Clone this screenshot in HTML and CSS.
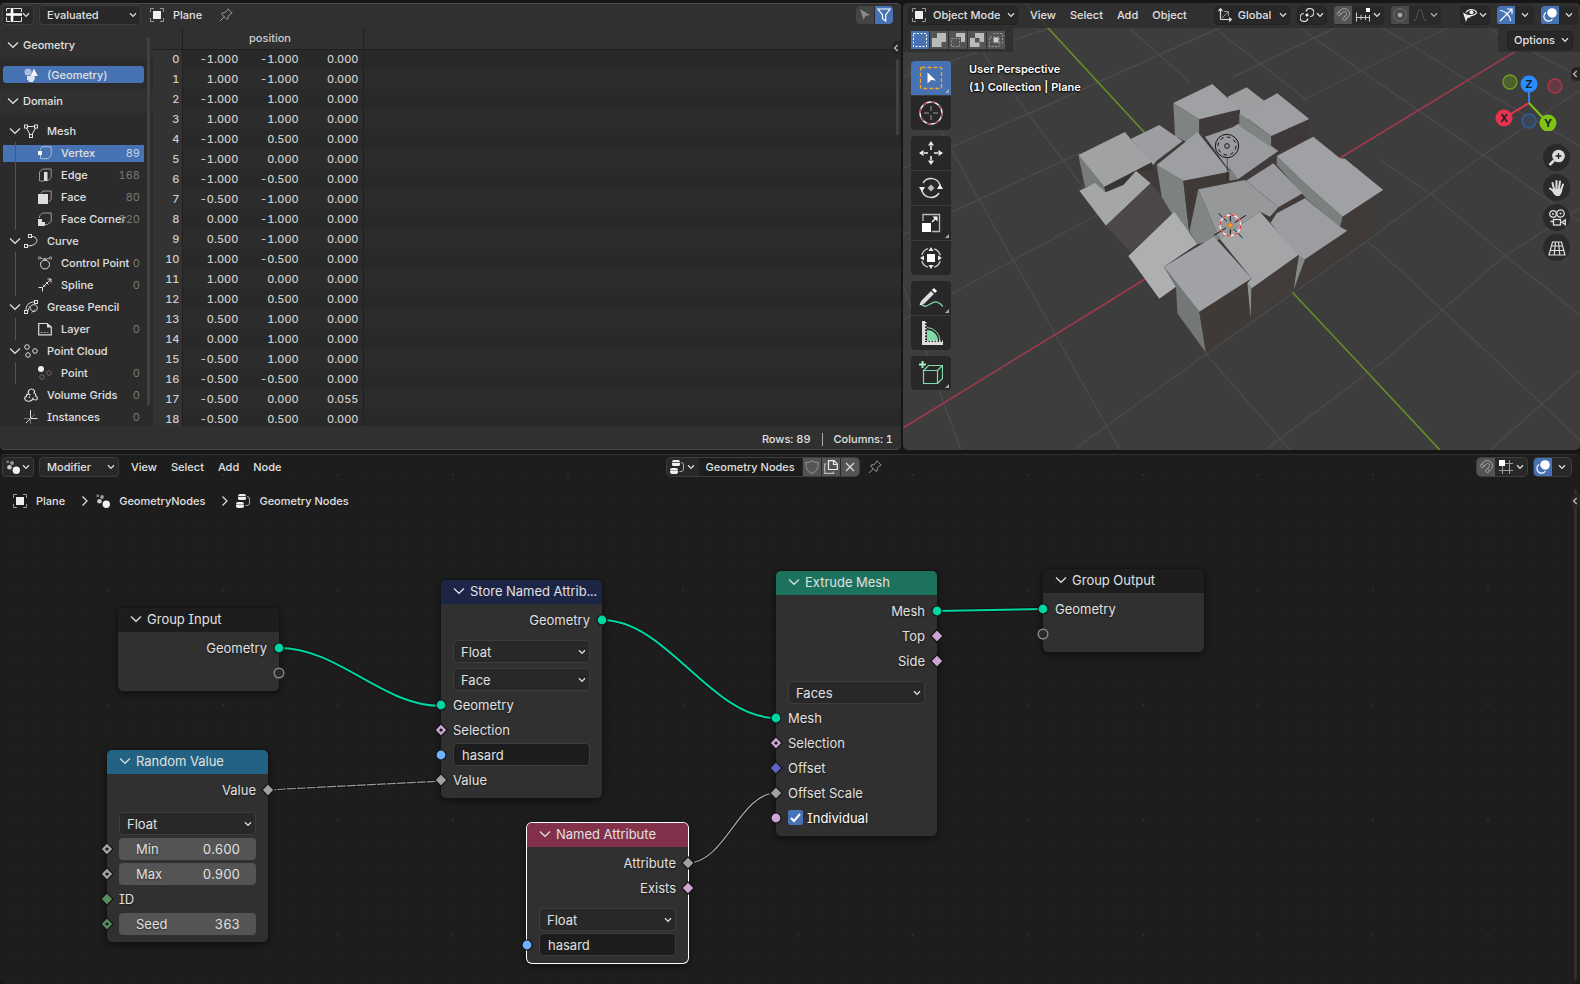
FILE: index.html
```html
<!DOCTYPE html>
<html lang="en">
<head>
<meta charset="utf-8">
<title>Geometry Nodes</title>
<link rel="stylesheet" href="styles.css">
</head>
<body>
<svg class="defs" aria-hidden="true">
  <defs>
    <symbol id="i-chev" viewBox="0 0 8 8"><path d="M1 2.3 4 5.4 7 2.3" fill="none" stroke="currentColor" stroke-width="1.3"/></symbol>
    <symbol id="i-open" viewBox="0 0 12 8"><path d="M1 1.5 6 6.3 11 1.5" fill="none" stroke="currentColor" stroke-width="1.2"/></symbol>
    <symbol id="i-sep" viewBox="0 0 8 12"><path d="M1.5 1.5 6 6 1.5 10.5" fill="none" stroke="currentColor" stroke-width="1.2"/></symbol>
    <symbol id="i-sheet" viewBox="0 0 16 16"><g fill="none" stroke="currentColor"><path d="M4 1.5H.5V4.500M7.500 1.500H15.500V5M.5 10V14.500H4M7.500 14.500H15.500V10"/><path d="M6 1V15M0 7.500H16" stroke="#fff" stroke-width="2.600"/></g></symbol>
    <symbol id="i-object" viewBox="0 0 14 14"><rect x="3" y="3" width="8" height="8" fill="#eee"/><path d="M.5 4V.5H4M10 .5h3.500V4M13.500 10v3.500H10M4 13.500H.5V10" fill="none" stroke="#999"/></symbol>
    <symbol id="i-pin" viewBox="0 0 14 14"><path d="M9 .8 13.200 5 11.800 5.400 9.400 8.200 9 11 7.800 11.300 2.700 6.200 3 5.200 5.800 4.600 8.500 2.300ZM5.200 8.800 1 13" fill="none" stroke="#999"/></symbol>
    <symbol id="i-cursor" viewBox="0 0 12 12"><path d="M1 0 11 6 6.500 7 4.500 11Z" fill="currentColor"/></symbol>
    <symbol id="i-filter" viewBox="0 0 14 14"><path d="M.8 1H13.200L8.700 7V13L5.500 10.500V7Z" fill="none" stroke="#fff" stroke-width="1.200"/></symbol>
    <symbol id="i-geo" viewBox="0 0 14 14"><circle cx="4" cy="4" r="3.600" fill="#a9bede"/><path d="M10 .5 13.800 8H6.500Z" fill="#f4f4f4"/><path d="M3 8h7.500l.5 2.500-2 3.500H5.500L3 11.500Z" fill="#dbe3f0"/></symbol>
    <symbol id="i-mesh" viewBox="0 0 14 14"><g fill="none" stroke="currentColor"><rect x=".5" y="1" width="3" height="3"/><rect x="10.500" y="1" width="3" height="3"/><rect x="5.500" y="10.500" width="3" height="3"/><path d="M3.500 2.500h7M2.500 4l3.500 6.500M11.500 4 8 10.500"/></g></symbol>
    <symbol id="i-vertex" viewBox="0 0 14 14"><path d="M2.500 4V2.500L4 .8h9.200V9l-2 2.700q-1 1-2.200 1H2.500V9" fill="none" stroke="#a9bede"/><rect y="5" width="4" height="4" fill="#fff"/></symbol>
    <symbol id="i-edge" viewBox="0 0 14 14"><path d="M6 13H1.500V4L4.500 1h8.700v8.500L9.500 13" fill="none" stroke="#999"/><rect x="6" y="4" width="3.500" height="9" fill="#ddd"/></symbol>
    <symbol id="i-face" viewBox="0 0 14 14"><path d="M3 3.500 5 1h8.200v8L11 12" fill="none" stroke="#999"/><rect y="4" width="10" height="10" fill="#ddd"/></symbol>
    <symbol id="i-corner" viewBox="0 0 14 14"><path d="M1.500 6V4L4.500 1h8.700v8.500L9.500 12.500H7" fill="none" stroke="#999"/><path d="M0 7h4v3h3v4H0Z" fill="#ddd"/></symbol>
    <symbol id="i-curve" viewBox="0 0 14 14"><g fill="none" stroke="currentColor"><rect x="4.500" y=".5" width="3" height="3"/><rect x=".5" y="10.500" width="3" height="3"/><path d="M7.500 2.500C15 2 15.500 12 3.500 12"/></g></symbol>
    <symbol id="i-ctrl" viewBox="0 0 14 14"><g fill="none"><circle cx="7" cy="8.500" r="4.500" stroke="currentColor"/><path d="M2 2.500h3.500M8.500 2.500H12M.5 1h2v2h-2ZM11.500 1h2v2h-2Z" stroke="#999"/><circle cx="7" cy="3.500" r="1" stroke="currentColor"/></g></symbol>
    <symbol id="i-spline" viewBox="0 0 14 14"><path d="M.5 9.500H4.500V13.500M4.500 9.500 13 1M9.500 1H13V4.500M5 6.500l2.500 2.500M8 4l2.500 2.500" fill="none" stroke="currentColor"/></symbol>
    <symbol id="i-grease" viewBox="0 0 14 14"><g fill="none" stroke="currentColor"><rect x="10.500" y=".5" width="3" height="3"/><rect x=".5" y="10.500" width="3" height="3"/><path d="M10.500 2C4 2 2 6 2 10.500M3.500 12.500c1-6 5-9 8-7.500s2 6-1 6.500-4-3-5-5M8 12.500l3-3"/></g></symbol>
    <symbol id="i-layer" viewBox="0 0 14 14"><path d="M.7 1.500H9l4.300 3.500v7.800H.7Z" fill="none" stroke="#ddd" stroke-width="1.200"/><path d="M9 1v4.500h4.500Z" fill="#ddd"/><path d="M2.500 10.500h9" stroke="#999" stroke-dasharray="2 1"/></symbol>
    <symbol id="i-cloud" viewBox="0 0 14 14"><g fill="none" stroke="currentColor"><circle cx="3" cy="3" r="2.300"/><circle cx="11" cy="7" r="2.300"/><circle cx="4" cy="11" r="2.300"/></g></symbol>
    <symbol id="i-point" viewBox="0 0 14 14"><circle cx="3" cy="3" r="3" fill="#eee"/><g fill="none" stroke="#666"><circle cx="11" cy="7" r="2.300"/><circle cx="4" cy="11" r="2.300"/></g></symbol>
    <symbol id="i-volume" viewBox="0 0 14 14"><path d="M3 13C0 12 0 9 2.500 8.500 2 6.500 3.500 6 4.500 6 3.500 3 5.500 1 7.500 1c3 0 3.500 2.500 2.500 4 2 .5 2 2 1.500 3 2.500.5 2.500 4 0 4-1 0-2-.5-2.500-1.500C8 13 5 13.500 3 13ZM4.500 6l2 1M5 10l1-1.500" fill="none" stroke="currentColor" stroke-width="1.200"/></symbol>
    <symbol id="i-inst" viewBox="0 0 14 14"><path d="M6.500 0v8.500H13.500M6.500 8.500 2 13" fill="none" stroke="currentColor"/><path d="M6.500 8.500V14M0 8.500h6.500M6.500 8.500 11 4" fill="none" stroke="#777"/></symbol>
    <symbol id="i-gnodes" viewBox="0 0 14 14"><circle cx="1.700" cy="1.700" r="1.500" fill="#777"/><circle cx="6" cy="3" r="1.900" fill="#999"/><circle cx="3.500" cy="7.300" r="2.300" fill="#ccc"/><circle cx="10.300" cy="10.200" r="3.700" fill="#f2f2f2"/></symbol>
    <symbol id="i-tree" viewBox="0 0 14 14"><g fill="#eee"><path d="M2 2.200Q2 0 4 0h4q2 0 2 2.200ZM2 3h8v1.500Q10 6 8.500 6h-5Q2 6 2 4.500ZM0 10.200Q0 8 2 8h4q2 0 2 2.200Z"/><path d="M.5 11h7v1.500q0 1-1 1h-5q-1 0-1-1Z" stroke="#eee"/></g><path d="M11 2.500q2.500 0 2.500 2.500v4q0 2.500-2.500 2.500H9.500" fill="none" stroke="#aaa"/></symbol>
    <symbol id="i-orient" viewBox="0 0 14 14"><path d="M2.500 11.500V1M.5 3l2-2.300 2 2.300M2.500 11.500H13M11 9.500l2.300 2-2.300 2" fill="none" stroke="#ddd" stroke-width="1.200"/><path d="M4 10l6-6M6 3.500h4.500V8" fill="none" stroke="#999"/></symbol>
    <symbol id="i-pivot" viewBox="0 0 14 14"><g fill="none" stroke="#ddd" stroke-width="1.200"><path d="M6 3.500A4 4 0 1 1 10 8.500"/><path d="M8 10.500A4 4 0 1 1 4 5.500"/></g><circle cx="7" cy="7" r="1.500" fill="#fff"/></symbol>
    <symbol id="i-magnet" viewBox="0 0 14 14"><path d="M1 5.500 5 1.800C7 0 10 .2 12 2.200s2 5 0 7L8.500 13 6.300 10.800 10 7c1-1 .8-2.200 0-2.800-.8-.8-2-.8-2.800 0L3.300 8ZM3 3.700 5.200 6M10.700 10.800 8.400 8.600" fill="none" stroke="#a8a8a8"/></symbol>
    <symbol id="i-incr" viewBox="0 0 14 14"><path d="M.5 4.500v9M13.500 7v6.500M5 7v5M9.500 7v5M.5 9.500h13" fill="none" stroke="#ccc"/><rect x="10" y="0" width="4" height="4" fill="#fff"/></symbol>
    <symbol id="i-snapgrid" viewBox="0 0 14 14"><path d="M3.500 5v9M10.500 0v14M5 3.500h9M0 10.500h14" fill="none" stroke="#999"/><rect x="0" y="0" width="6" height="6" fill="#fff"/></symbol>
    <symbol id="i-prop" viewBox="0 0 14 14"><circle cx="7" cy="7" r="6.300" fill="none" stroke="#888"/><circle cx="7" cy="7" r="2.300" fill="#ddd"/></symbol>
    <symbol id="i-fall" viewBox="0 0 14 14"><path d="M.5 12.500C5 12.500 4 1.500 7 1.500s2 11 6.500 11" fill="none" stroke="#666"/></symbol>
    <symbol id="i-eye" viewBox="0 0 14 14"><path d="M3 4.500C5.500.500 11.500.500 13.800 4.500 11.500 8 7 8 5 7" fill="none" stroke="#eee" stroke-width="1.200"/><circle cx="8.500" cy="4.300" r="2" fill="#eee"/><path d="M0 4.500 8.500 9 4.500 10 3 14Z" fill="#eee"/></symbol>
    <symbol id="i-gizmo" viewBox="0 0 14 14"><path d="M1 2.500C6 2.500 11.500 8 11.500 13" fill="none" stroke="#fff" stroke-width="1.200"/><path d="M1 13 12.500 1.500M8 1h5v5" fill="none" stroke="#fff" stroke-width="1.200"/></symbol>
    <symbol id="i-over" viewBox="0 0 14 14"><circle cx="9" cy="5" r="4.800" fill="#fff"/><path d="M3 4.500A4.700 4.700 0 1 0 9.500 11" fill="none" stroke="#fff" stroke-width="1.200"/><path d="M4.500 6.500A3 3 0 0 0 7.500 9.700" fill="none" stroke="#4772b3" stroke-width="1.200"/></symbol>
    <symbol id="i-shield" viewBox="0 0 14 14"><path d="M7 .8C9 2.200 11 2.600 13.200 2.500 13.200 8 11.500 11.500 7 13.400 2.500 11.500.8 8 .8 2.500 3 2.600 5 2.200 7 .8Z" fill="none" stroke="#999"/></symbol>
    <symbol id="i-copy" viewBox="0 0 14 14"><path d="M4.500.7H10L13.300 4V9.500H4.500ZM9.500 1V4.500H13" fill="none" stroke="#eee" stroke-width="1.200"/><path d="M2.500 4H.7v9.300H9.500V11.500" fill="none" stroke="#bbb" stroke-width="1.200"/></symbol>
    <symbol id="i-x" viewBox="0 0 14 14"><path d="M3 3l8 8M11 3l-8 8" fill="none" stroke="#ddd" stroke-width="1.200"/></symbol>
    <symbol id="s-set" viewBox="0 0 14 14"><rect x=".5" y=".5" width="13" height="13" fill="none" stroke="#fff" stroke-dasharray="2 1.500"/></symbol>
    <symbol id="s-ext" viewBox="0 0 14 14"><path d="M5 0h9v9H9.500v5H0V5h5Z" fill="#bbb"/></symbol>
    <symbol id="s-sub" viewBox="0 0 14 14"><path d="M5 0h9v9H10V4H5Z" fill="#bbb"/><rect x=".5" y="5.500" width="8" height="8" fill="none" stroke="#999" stroke-dasharray="2 1.500"/></symbol>
    <symbol id="s-inv" viewBox="0 0 14 14"><path fill-rule="evenodd" d="M5 0h9v9H9.500v5H0V5h5ZM5 5v4.500h4.500V5Z" fill="#bbb"/></symbol>
    <symbol id="s-int" viewBox="0 0 14 14"><path d="M4 .5h9.500V10H10M10 4H.5v9.500H10Z" fill="none" stroke="#999" stroke-dasharray="2 1.500"/><rect x="4.500" y="4.500" width="5" height="5" fill="#ccc"/></symbol>
    <symbol id="t-select" viewBox="0 0 24 24"><rect x="1.500" y="1.500" width="21" height="21" rx="1" fill="none" stroke="#f5a623" stroke-width="1.300" stroke-dasharray="4 2"/><path d="M8.500 6.500 17 14.500 12 14 8.500 17.500Z" fill="#fff"/></symbol>
    <symbol id="t-cursor" viewBox="0 0 24 24"><circle cx="12" cy="12" r="11" fill="none" stroke="#eee" stroke-width="1.400"/><circle cx="12" cy="12" r="11" fill="none" stroke="#b04050" stroke-width="1.400" stroke-dasharray="4.300 4.300"/><path d="M12 5v5M12 14v5M5 12h5M14 12h5" stroke="#999"/></symbol>
    <symbol id="t-move" viewBox="0 0 24 24"><path d="M12 0l3 4.500H9ZM12 24l3-4.500H9ZM0 12l4.500-3v6ZM24 12l-4.500-3v6Z" fill="#eee"/><path d="M12 5v4M12 15v4M5 12h4M15 12h4" stroke="#eee" stroke-width="1.600"/></symbol>
    <symbol id="t-rotate" viewBox="0 0 24 24"><path d="M4 7A9.500 9.500 0 0 1 21 9M20 17A9.500 9.500 0 0 1 3 15" fill="none" stroke="#ddd" stroke-width="1.400"/><path d="M0 11h6l-3 5ZM24 13h-6l3-5Z" fill="#eee"/><path d="M12 8.500l3.500 3.500-3.500 3.500L8.500 12Z" fill="#bbb"/></symbol>
    <symbol id="t-scale" viewBox="0 0 24 24"><path d="M4 10V3.500H20.500V20.500H13" fill="none" stroke="#bbb" stroke-width="1.300"/><rect x="3" y="12" width="9" height="9" fill="#fff"/><path d="M13 11l4-4" stroke="#fff" stroke-width="1.500"/><path d="M18.500 5.500v5l-5-5Z" fill="#fff"/></symbol>
    <symbol id="t-xform" viewBox="0 0 24 24"><circle cx="12" cy="12" r="9.700" fill="none" stroke="#ccc" stroke-width="1.300" stroke-dasharray="9 6.230" stroke-dashoffset="-3"/><rect x="8" y="8" width="8" height="8" fill="#fff"/><path d="M12 1l2.500 4h-5ZM12 23l2.500-4h-5ZM1 12l4-2.500v5ZM23 12l-4-2.500v5Z" fill="#eee"/></symbol>
    <symbol id="t-draw" viewBox="0 0 24 24"><path d="M2 18C8 25 13 13 19 16.500 21 17.500 22 18 24 20.500" fill="none" stroke="#82d9a8" stroke-width="1.300"/><path d="M3.500 16.500 13.500 6.500" stroke="#ddd" stroke-width="4"/><path d="M.5 19.500 2 15l3 3Z" fill="#eee"/><path d="M14.500 5.500l2-2" stroke="#fff" stroke-width="4.500"/></symbol>
    <symbol id="t-measure" viewBox="0 0 24 24"><path d="M8 20V9A11 11 0 0 1 19 20Z" fill="#82d9a8"/><path d="M8 6.500A13.500 13.500 0 0 1 21 20" fill="none" stroke="#82d9a8"/><path d="M4.500 0V22.500H24" fill="none" stroke="#ddd" stroke-width="3"/><path d="M6.500 1v19M8 20.500h16" stroke="#ddd" stroke-width="2" stroke-dasharray="1.500 1.500"/></symbol>
    <symbol id="t-cube" viewBox="0 0 24 24"><path d="M4.500 9.500h14v13h-14ZM4.500 9.500l5-5H23.500v13l-5 5M18.500 9.500 23.500 4.500" fill="none" stroke="#82d9a8" stroke-width="1.200"/><path d="M3.500 0v7M0 3.500h7" stroke="#a4ecc4" stroke-width="2"/></symbol>
    <symbol id="n-zoom" viewBox="0 0 18 18"><circle cx="10.500" cy="7" r="6.300" fill="#ddd"/><path d="M6 11.500 1.500 16" stroke="#ddd" stroke-width="2.500"/><path d="M10.500 4v6M7.500 7h6" stroke="#222" stroke-width="1.300"/></symbol>
    <symbol id="n-hand" viewBox="0 0 18 18"><g stroke="#ddd" stroke-width="2" stroke-linecap="round"><path d="M6 10 4.500 4M8.500 9V2M11 9l1-6.500M13.200 10.500 15 5.500M5.500 12 2 9.500"/></g><path d="M5 9.500h9.300q0 5-3 7.500H8Q5 14.500 4 12Z" fill="#ddd"/></symbol>
    <symbol id="n-cam" viewBox="0 0 18 18"><g fill="none" stroke="#ddd" stroke-width="1.300"><circle cx="5" cy="5" r="3.300"/><circle cx="12.500" cy="4.500" r="3.700"/><rect x="5.500" y="10.500" width="7" height="5.500"/><path d="M5.500 12.500H2.500M14 13.200l3.300-2.500v5Z"/></g><circle cx="5" cy="5" r="1" fill="#ddd"/><circle cx="12.500" cy="4.500" r="1" fill="#ddd"/></symbol>
    <symbol id="n-grid" viewBox="0 0 18 18"><path d="M4.500 3h9L17 16H1ZM3.500 7h11M2.500 11.500h13M7.500 3 6.200 16M10.500 3l1.300 13" fill="none" stroke="#ddd" stroke-width="1.200"/></symbol>
    <symbol id="k-circle" viewBox="0 0 16 16"><circle cx="8" cy="8" r="5" fill="currentColor" stroke="#151515" stroke-width="1.200"/></symbol>
    <symbol id="k-ring" viewBox="0 0 16 16"><circle cx="8" cy="8" r="4.800" fill="#2a2a2a" stroke="#888" stroke-width="1.400"/></symbol>
    <symbol id="k-dia" viewBox="0 0 16 16"><path d="M8 1.900 14.100 8 8 14.100 1.900 8Z" fill="currentColor" stroke="#151515" stroke-width="1.200"/></symbol>
    <symbol id="k-dot" viewBox="0 0 16 16"><path d="M8 1.900 14.100 8 8 14.100 1.900 8Z" fill="currentColor" stroke="#151515" stroke-width="1.200"/><circle cx="8" cy="8" r="1.600" fill="#151515"/></symbol>
  </defs>
</svg>

<main class="app">
  <section class="sheet" aria-label="Spreadsheet">
    <header class="bar">
      <button class="btn kind" aria-label="Editor type"><svg class="i16"><use href="#i-sheet"/></svg><svg class="chev"><use href="#i-chev"/></svg></button>
      <span class="pick eval"><select aria-label="Object evaluation state"><option>Evaluated</option></select><svg class="chev"><use href="#i-chev"/></svg></span>
      <span class="crumb"><svg class="i14"><use href="#i-object"/></svg>Plane</span>
      <button class="bare" aria-label="Pin"><svg class="i14"><use href="#i-pin"/></svg></button>
      <span class="group end">
        <button class="tog off" aria-label="Selected only"><svg class="i12"><use href="#i-cursor"/></svg></button><button class="tog on" aria-label="Filter"><svg class="i14"><use href="#i-filter"/></svg></button>
      </span>
    </header>
    <div class="sheet-body">
      <aside class="side">
        <h2 class="panel"><svg class="open"><use href="#i-open"/></svg>Geometry</h2>
        <button class="row pill geo"><svg class="i14"><use href="#i-geo"/></svg>(Geometry)</button>
        <h2 class="panel">
          <svg class="open"><use href="#i-open"/></svg>Domain</h2>
        <div class="tree">
          <div class="row head"><svg class="open"><use href="#i-open"/></svg><svg class="i14"><use href="#i-mesh"/></svg>Mesh</div>
          <div class="kids">
            <button class="row pill"><svg class="i14"><use href="#i-vertex"/></svg><span>Vertex</span><b>89</b></button>
            <button class="row"><svg class="i14"><use href="#i-edge"/></svg><span>Edge</span><b>168</b></button>
            <button class="row"><svg class="i14"><use href="#i-face"/></svg><span>Face</span><b>80</b></button>
            <button class="row"><svg class="i14"><use href="#i-corner"/></svg><span>Face Corner</span><b>320</b></button>
          </div>
          <div class="row head"><svg class="open"><use href="#i-open"/></svg><svg class="i14"><use href="#i-curve"/></svg>Curve</div>
          <div class="kids">
            <button class="row"><svg class="i14"><use href="#i-ctrl"/></svg><span>Control Point</span><b>0</b></button>
            <button class="row"><svg class="i14"><use href="#i-spline"/></svg><span>Spline</span><b>0</b></button>
          </div>
          <div class="row head"><svg class="open"><use href="#i-open"/></svg><svg class="i14"><use href="#i-grease"/></svg>Grease Pencil</div>
          <div class="kids">
            <button class="row"><svg class="i14"><use href="#i-layer"/></svg><span>Layer</span><b>0</b></button>
          </div>
          <div class="row head"><svg class="open"><use href="#i-open"/></svg><svg class="i14"><use href="#i-cloud"/></svg>Point Cloud</div>
          <div class="kids">
            <button class="row"><svg class="i14"><use href="#i-point"/></svg><span>Point</span><b>0</b></button>
          </div>
          <button class="row flat"><svg class="i14"><use href="#i-volume"/></svg><span>Volume Grids</span><b>0</b></button>
          <button class="row flat"><svg class="i14"><use href="#i-inst"/></svg><span>Instances</span><b>0</b></button>
        </div>
        <i class="scroll"></i>
      </aside>
      <div class="grid">
        <table>
          <thead><tr><th></th><th colspan="3">position</th><th></th></tr></thead>
          <tbody>
            <tr><th>0</th><td>-1.000</td><td>-1.000</td><td>0.000</td><td></td></tr>
            <tr><th>1</th><td>1.000</td><td>-1.000</td><td>0.000</td><td></td></tr>
            <tr><th>2</th><td>-1.000</td><td>1.000</td><td>0.000</td><td></td></tr>
            <tr><th>3</th><td>1.000</td><td>1.000</td><td>0.000</td><td></td></tr>
            <tr><th>4</th><td>-1.000</td><td>0.500</td><td>0.000</td><td></td></tr>
            <tr><th>5</th><td>-1.000</td><td>0.000</td><td>0.000</td><td></td></tr>
            <tr><th>6</th><td>-1.000</td><td>-0.500</td><td>0.000</td><td></td></tr>
            <tr><th>7</th><td>-0.500</td><td>-1.000</td><td>0.000</td><td></td></tr>
            <tr><th>8</th><td>0.000</td><td>-1.000</td><td>0.000</td><td></td></tr>
            <tr><th>9</th><td>0.500</td><td>-1.000</td><td>0.000</td><td></td></tr>
            <tr><th>10</th><td>1.000</td><td>-0.500</td><td>0.000</td><td></td></tr>
            <tr><th>11</th><td>1.000</td><td>0.000</td><td>0.000</td><td></td></tr>
            <tr><th>12</th><td>1.000</td><td>0.500</td><td>0.000</td><td></td></tr>
            <tr><th>13</th><td>0.500</td><td>1.000</td><td>0.000</td><td></td></tr>
            <tr><th>14</th><td>0.000</td><td>1.000</td><td>0.000</td><td></td></tr>
            <tr><th>15</th><td>-0.500</td><td>1.000</td><td>0.000</td><td></td></tr>
            <tr><th>16</th><td>-0.500</td><td>-0.500</td><td>0.000</td><td></td></tr>
            <tr><th>17</th><td>-0.500</td><td>0.000</td><td>0.055</td><td></td></tr>
            <tr><th>18</th><td>-0.500</td><td>0.500</td><td>0.000</td><td></td></tr>
          </tbody>
        </table>
        <i class="scroll"></i>
        <button class="flap" aria-label="Show sidebar"><svg class="chev"><use href="#i-chev"/></svg></button>
      </div>
    </div>
    <footer class="status"><span>Rows: 89</span><i></i><span>Columns: 1</span></footer>
  </section>

  <section class="view" aria-label="3D Viewport">
    <svg class="scene" viewBox="903 3 677 447" preserveAspectRatio="xMidYMid slice" role="img" aria-label="Extruded cubes on a grid">
      <g stroke="#4a4a4a" stroke-width="1.400" fill="none">
        <path d="M903 320 1097 215 1180 172M903 235 952 212 1080 153M903 168 1030 113 1210 32 1275 3M903 77 1050 28M1233 77 1335 28 1385 3M1303 100 1412 45 1500 3"/>
        <path d="M1073 450 1205 355 1367 241 1483 155 1580 90M1265 450 1385 360 1503 257 1580 208M1490 450 1580 370"/>
        <path d="M903 285 940 393 961 450M907 67 968 180 1055 334 1120 450M983 53 1080 183 1100 215M1205 353 1290 450M1130 29 1190 82M1217 30 1307 100M1300 28 1363 72 1483 155 1580 222M1367 241 1400 270 1580 440M1380 160 1430 193 1507 257 1580 315M1381 27 1412 45 1487 93 1580 146M1490 29 1580 77"/>
      </g>
      <path d="M903 428 1100 307 1340 158 1580 12" stroke="#a03a4b" stroke-width="1.600" fill="none"/>
      <path d="M1025 3 1144 132 1293 293 1355 359 1440 450" stroke="#648a26" stroke-width="1.800" fill="none"/>
      <g transform="translate(1060 70) scale(.3333)">
        <path d="M345 110 520 110 740 150 742 205 760 205 968 362 948 460 918 512 700 665 572 748 438 848 352 730 350 680 298 686 200 540 140 460 75 345 100 270 300 200Z" fill="#403b39"/>
        <path d="M503 80 560 52 612 92 560 150 530 140Z" fill="#9c9ea0"/>
        <path d="M340 99 418 148 418 200 380 216 345 198Z" fill="#7f8381"/>
        <path d="M418 148 540 118 540 165 430 200 418 195Z" fill="#3f3a39"/>
        <path d="M340 99 457 42 540 118 418 148Z" fill="#9fa1a4"/>
        <path d="M518 172 535 161 555 174 657 242 535 328 500 290 435 200Z" fill="#999b9e"/>
        <path d="M538 130 634 198 634 232 538 168Z" fill="#7f8381"/>
        <path d="M634 198 748 147 742 205 655 243 634 228Z" fill="#3e3938"/>
        <path d="M540 130 652 70 748 147 634 198Z" fill="#9d9fa2"/>
        <path d="M650 258 735 340 848 440 843 475 740 387 650 284Z" fill="#7b7f7d"/>
        <path d="M650 258 760 200 840 265 855 266 970 360 848 440 735 340Z" fill="#9fa1a4"/>
        <path d="M848 440 970 360 948 460 918 512 840 470Z" fill="#403a38"/>
        <path d="M535 328 657 242 650 262 560 328Z" fill="#403b3a"/>
        <path d="M558 332 640 280 728 370 655 412Z" fill="#999b9e"/>
        <path d="M735 568 718 550 708 610 700 662Z" fill="#858987"/>
        <path d="M632 458 650 430 735 385 840 470 862 482 735 568 700 545Z" fill="#9b9da0"/>
        <path d="M212 207 298 165 368 213 290 272 280 285Z" fill="#9c9ea1"/>
        <path d="M55 255 133 350 137 367 105 340 75 352Z" fill="#777b79"/>
        <path d="M133 350 275 277 276 300 230 303 190 345 137 367Z" fill="#383433"/>
        <path d="M55 255 195 186 212 207 275 277 133 350Z" fill="#a0a2a4"/>
        <path d="M58 362 105 338 137 367 190 345 228 303 272 340 138 467Z" fill="#a4a6a7"/>
        <path d="M138 467 272 340 345 425 212 548Z" fill="#4c4748"/>
        <path d="M290 285 370 332 388 490 335 430 305 380Z" fill="#7d817f"/>
        <path d="M370 332 508 305 508 340 415 358 388 490Z" fill="#3f3a38"/>
        <path d="M290 285 413 186 508 305 370 332Z" fill="#9d9fa2"/>
        <path d="M508 290 508 332 535 328Z" fill="#7b7f7d"/>
        <path d="M415 358 480 508 412 522 388 485Z" fill="#818583"/>
        <path d="M415 358 555 330 655 412 630 440 600 425 480 508Z" fill="#96989a"/>
        <path d="M205 558 343 425 412 522 312 590 348 650 298 686Z" fill="#adafb0"/>
        <path d="M562 640 575 655 572 748Z" fill="#8a8e8c"/>
        <path d="M575 655 715 555 700 665 572 748Z" fill="#423c3a"/>
        <path d="M480 508 600 425 715 555 575 655 562 640 575 625Z" fill="#a3a5a7"/>
        <path d="M312 590 418 725 438 848 352 730 348 650Z" fill="#737775"/>
        <path d="M418 725 560 635 572 748 438 848Z" fill="#403a37"/>
        <path d="M312 590 462 500 575 625 418 725Z" fill="#a0a2a5"/>
        <g fill="none" stroke="#111" stroke-width="3">
          <circle cx="501" cy="228" r="35"/><circle cx="501" cy="228" r="27" stroke-dasharray="11 10"/><circle cx="501" cy="228" r="7"/><path d="M502 263v70" stroke-width="1.500"/>
          <path d="M476 430l24 24M522 478l26 26M462 496l36-22M524 458l34-22M511 430v24M511 478v20"/>
          <circle cx="511" cy="466" r="31" stroke="#eee" stroke-width="4"/><circle cx="511" cy="466" r="31" stroke="#e33" stroke-width="4" stroke-dasharray="12 12.300"/>
        </g>
        <circle cx="511" cy="466" r="7" fill="#ff9a1f" stroke="#7a4a10"/>
      </g>
    </svg>
    <header class="bar glass">
      <span class="pick mode"><svg class="i14"><use href="#i-object"/></svg><select aria-label="Mode"><option>Object Mode</option></select><svg class="chev"><use href="#i-chev"/></svg></span>
      <nav class="menus"><button>View</button><button>Select</button><button>Add</button><button>Object</button></nav>
      <span class="pick orient"><svg class="i14"><use href="#i-orient"/></svg><select aria-label="Transform orientation"><option>Global</option></select><svg class="chev"><use href="#i-chev"/></svg></span>
      <button class="btn kind" aria-label="Pivot point"><svg class="i14"><use href="#i-pivot"/></svg><svg class="chev"><use href="#i-chev"/></svg></button>
      <span class="group"><button class="tog grey" aria-label="Snap"><svg class="i14"><use href="#i-magnet"/></svg></button><button class="tog wide" aria-label="Snap to"><svg class="i14"><use href="#i-incr"/></svg><svg class="chev"><use href="#i-chev"/></svg></button></span>
      <span class="group faint"><button class="tog grey" aria-label="Proportional editing"><svg class="i14"><use href="#i-prop"/></svg></button><button class="tog wide" aria-label="Falloff"><svg class="i14"><use href="#i-fall"/></svg><svg class="chev"><use href="#i-chev"/></svg></button></span>
      <button class="btn kind end" aria-label="Object types visibility"><svg class="i14"><use href="#i-eye"/></svg><svg class="chev"><use href="#i-chev"/></svg></button>
      <span class="group"><button class="tog on" aria-label="Show gizmo"><svg class="i14"><use href="#i-gizmo"/></svg></button><button class="tog" aria-label="Gizmos"><svg class="chev"><use href="#i-chev"/></svg></button></span>
      <span class="group"><button class="tog on" aria-label="Show overlays"><svg class="i14"><use href="#i-over"/></svg></button><button class="tog" aria-label="Overlays"><svg class="chev"><use href="#i-chev"/></svg></button></span>
    </header>
    <div class="settings">
      <div class="glass modes">
        <button class="tog on" aria-label="Set selection"><svg class="i14"><use href="#s-set"/></svg></button><button class="tog grey" aria-label="Extend selection"><svg class="i14"><use href="#s-ext"/></svg></button><button class="tog grey" aria-label="Subtract selection"><svg class="i14"><use href="#s-sub"/></svg></button><button class="tog grey" aria-label="Invert selection"><svg class="i14"><use href="#s-inv"/></svg></button><button class="tog grey" aria-label="Intersect selection"><svg class="i14"><use href="#s-int"/></svg></button>
      </div>
      <div class="glass opts"><button class="btn">Options<svg class="chev"><use href="#i-chev"/></svg></button></div>
    </div>
    <div class="stage">
      <div class="tools">
        <div class="tset"><button class="tool on" aria-label="Select box"><svg><use href="#t-select"/></svg><i></i></button><button class="tool" aria-label="Cursor"><svg><use href="#t-cursor"/></svg></button></div>
        <div class="tset"><button class="tool" aria-label="Move"><svg><use href="#t-move"/></svg></button><button class="tool" aria-label="Rotate"><svg><use href="#t-rotate"/></svg></button><button class="tool" aria-label="Scale"><svg><use href="#t-scale"/></svg><i></i></button><button class="tool" aria-label="Transform"><svg><use href="#t-xform"/></svg></button></div>
        <div class="tset"><button class="tool" aria-label="Annotate"><svg><use href="#t-draw"/></svg><i></i></button><button class="tool" aria-label="Measure"><svg><use href="#t-measure"/></svg></button></div>
        <div class="tset"><button class="tool" aria-label="Add cube"><svg><use href="#t-cube"/></svg><i></i></button></div>
      </div>
      <p class="info">User Perspective<br>(1) Collection | Plane</p>
      <div class="nav">
        <svg class="axes" viewBox="0 0 76 60" role="img" aria-label="View axes">
          <path d="M38 32V13" stroke="#2b84e8" stroke-width="2"/><path d="M38 32 13 47" stroke="#e8324e" stroke-width="2"/><path d="M38 32 57 52" stroke="#7fc414" stroke-width="2"/>
          <circle cx="19" cy="11" r="7" fill="#4d5f2c" stroke="#6fa021" stroke-width="1.300"/><circle cx="64" cy="15" r="7" fill="#633c43" stroke="#b03246" stroke-width="1.300"/><circle cx="38" cy="50" r="7" fill="#3a4555" stroke="#2d609f" stroke-width="1.300"/>
          <circle cx="38" cy="13" r="8.500" fill="#2b8cff"/><circle cx="13" cy="47" r="8.500" fill="#e8324e"/><circle cx="57" cy="52" r="8.500" fill="#7fc414"/>
          <text x="38" y="17">Z</text><text x="13" y="51">X</text><text x="57" y="56">Y</text>
        </svg>
        <button class="round" aria-label="Zoom"><svg><use href="#n-zoom"/></svg></button>
        <button class="round" aria-label="Pan"><svg><use href="#n-hand"/></svg></button>
        <button class="round" aria-label="Camera view"><svg><use href="#n-cam"/></svg></button>
        <button class="round" aria-label="Perspective"><svg><use href="#n-grid"/></svg></button>
      </div>
      <button class="flap" aria-label="Show sidebar"><svg class="chev"><use href="#i-chev"/></svg></button>
    </div>
  </section>

  <section class="nodes" aria-label="Geometry node editor">
    <svg class="wires" aria-hidden="true">
      <defs>
        <pattern id="dots" width="23" height="23" patternUnits="userSpaceOnUse" x="5" y="9"><circle cx="11" cy="12" r=".8" fill="#232323"/></pattern>
        <pattern id="major" width="115" height="115" patternUnits="userSpaceOnUse" x="50" y="80"><circle cx="58" cy="56" r="1.200" fill="#2a2a2a"/></pattern>
      </defs>
      <rect width="100%" height="100%" fill="url(#dots)"/><rect width="100%" height="100%" fill="url(#major)"/>
      <g transform="translate(0 -454)" fill="none">
        <g stroke="#121212" stroke-width="4"><path d="M279 648C339 648 382 706 441 706M602 620C667 620 711 718 776 718M937 611 1043 609"/></g>
        <g stroke="#00d6a3" stroke-width="2"><path d="M279 648C339 648 382 706 441 706M602 620C667 620 711 718 776 718M937 611 1043 609"/></g>
        <path d="M267 790 442 781M688 863C725 863 740 793 776 793" stroke="#121212" stroke-width="3"/>
        <path d="M267 790 442 781" stroke="#999" stroke-width="1.200" stroke-dasharray="9 1"/>
        <path d="M688 863C725 863 740 793 776 793" stroke="#aaa" stroke-width="1.200"/>
      </g>
    </svg>
    <header class="bar">
      <button class="btn kind" aria-label="Editor type"><svg class="i14"><use href="#i-gnodes"/></svg><svg class="chev"><use href="#i-chev"/></svg></button>
      <span class="pick modif"><select aria-label="Node tree type"><option>Modifier</option></select><svg class="chev"><use href="#i-chev"/></svg></span>
      <nav class="menus"><button>View</button><button>Select</button><button>Add</button><button>Node</button></nav>
      <div class="ident">
        <span class="group lined"><button class="tog wide" aria-label="Browse node tree"><svg class="i14"><use href="#i-tree"/></svg><svg class="chev"><use href="#i-chev"/></svg></button><input aria-label="Node tree name" value="Geometry Nodes"><button class="tog grey" aria-label="Fake user"><svg class="i14"><use href="#i-shield"/></svg></button><button class="tog grey" aria-label="Duplicate"><svg class="i14"><use href="#i-copy"/></svg></button><button class="tog grey" aria-label="Unlink"><svg class="i14"><use href="#i-x"/></svg></button></span>
        <button class="bare" aria-label="Pin"><svg class="i14"><use href="#i-pin"/></svg></button>
      </div>
      <div class="right">
        <span class="group lined"><button class="tog grey" aria-label="Snap"><svg class="i14"><use href="#i-magnet"/></svg></button><button class="tog wide" aria-label="Snap to"><svg class="i14"><use href="#i-snapgrid"/></svg><svg class="chev"><use href="#i-chev"/></svg></button></span>
        <span class="group lined"><button class="tog on" aria-label="Show overlays"><svg class="i14"><use href="#i-over"/></svg></button><button class="tog" aria-label="Overlays"><svg class="chev"><use href="#i-chev"/></svg></button></span>
      </div>
    </header>
    <nav class="path" aria-label="Node tree path">
      <span class="crumb"><svg class="i14"><use href="#i-object"/></svg>Plane</span><svg class="sep"><use href="#i-sep"/></svg>
      <span class="crumb"><svg class="i14"><use href="#i-gnodes"/></svg>GeometryNodes</span><svg class="sep"><use href="#i-sep"/></svg>
      <span class="crumb"><svg class="i14"><use href="#i-tree"/></svg>Geometry Nodes</span>
    </nav>
    <i class="scroll"></i>
    <button class="flap" aria-label="Show sidebar"><svg class="chev"><use href="#i-chev"/></svg></button>

    <article class="node n-in">
      <h3><svg class="open"><use href="#i-open"/></svg><span>Group Input</span></h3>
      <div class="nbody">
        <div class="slot out">Geometry<svg class="sock c-geo"><use href="#k-circle"/></svg></div>
        <div class="slot out"><svg class="sock"><use href="#k-ring"/></svg></div>
      </div>
    </article>

    <article class="node n-store">
      <h3><svg class="open"><use href="#i-open"/></svg><span>Store Named Attrib...</span></h3>
      <div class="nbody">
        <div class="slot out">Geometry<svg class="sock c-geo"><use href="#k-circle"/></svg></div>
        <div class="picks"><span class="pick"><select aria-label="Data type"><option>Float</option></select><svg class="chev"><use href="#i-chev"/></svg></span>
        <span class="pick"><select aria-label="Domain"><option>Face</option></select><svg class="chev"><use href="#i-chev"/></svg></span></div>
        <div class="slot"><svg class="sock c-geo"><use href="#k-circle"/></svg>Geometry</div>
        <div class="slot"><svg class="sock c-bool"><use href="#k-dot"/></svg>Selection</div>
        <div class="slot"><svg class="sock c-str"><use href="#k-circle"/></svg><input class="text" aria-label="Name" value="hasard"></div>
        <div class="slot"><svg class="sock c-val"><use href="#k-dia"/></svg>Value</div>
      </div>
    </article>

    <article class="node n-random">
      <h3><svg class="open"><use href="#i-open"/></svg><span>Random Value</span></h3>
      <div class="nbody">
        <div class="slot out">Value<svg class="sock c-val"><use href="#k-dia"/></svg></div>
        <div class="picks loose"><span class="pick"><select aria-label="Data type"><option>Float</option></select><svg class="chev"><use href="#i-chev"/></svg></span></div>
        <div class="slot"><svg class="sock c-val"><use href="#k-dot"/></svg><label class="num">Min<input value="0.600"></label></div>
        <div class="slot"><svg class="sock c-val"><use href="#k-dot"/></svg><label class="num">Max<input value="0.900"></label></div>
        <div class="slot"><svg class="sock c-int"><use href="#k-dia"/></svg>ID</div>
        <div class="slot"><svg class="sock c-int"><use href="#k-dot"/></svg><label class="num">Seed<input value="363"></label></div>
      </div>
    </article>

    <article class="node n-named">
      <h3><svg class="open"><use href="#i-open"/></svg><span>Named Attribute</span></h3>
      <div class="nbody">
        <div class="slot out">Attribute<svg class="sock c-val"><use href="#k-dia"/></svg></div>
        <div class="slot out">Exists<svg class="sock c-bool"><use href="#k-dia"/></svg></div>
        <div class="picks"><span class="pick"><select aria-label="Data type"><option>Float</option></select><svg class="chev"><use href="#i-chev"/></svg></span></div>
        <div class="slot"><svg class="sock c-str"><use href="#k-circle"/></svg><input class="text" aria-label="Name" value="hasard"></div>
      </div>
    </article>

    <article class="node n-extrude">
      <h3><svg class="open"><use href="#i-open"/></svg><span>Extrude Mesh</span></h3>
      <div class="nbody">
        <div class="slot out">Mesh<svg class="sock c-geo"><use href="#k-circle"/></svg></div>
        <div class="slot out">Top<svg class="sock c-bool"><use href="#k-dia"/></svg></div>
        <div class="slot out">Side<svg class="sock c-bool"><use href="#k-dia"/></svg></div>
        <div class="picks"><span class="pick"><select aria-label="Mode"><option>Faces</option></select><svg class="chev"><use href="#i-chev"/></svg></span></div>
        <div class="slot"><svg class="sock c-geo"><use href="#k-circle"/></svg>Mesh</div>
        <div class="slot"><svg class="sock c-bool"><use href="#k-dot"/></svg>Selection</div>
        <div class="slot"><svg class="sock c-vec"><use href="#k-dia"/></svg>Offset</div>
        <div class="slot"><svg class="sock c-val"><use href="#k-dia"/></svg>Offset Scale</div>
        <div class="slot"><svg class="sock c-bool"><use href="#k-circle"/></svg><label class="check"><input type="checkbox" checked><svg viewBox="0 0 15 15"><path d="M3 8l3 3 6-7" fill="none" stroke="#fff" stroke-width="2"/></svg>Individual</label></div>
      </div>
    </article>

    <article class="node n-out">
      <h3><svg class="open"><use href="#i-open"/></svg><span>Group Output</span></h3>
      <div class="nbody">
        <div class="slot"><svg class="sock c-geo"><use href="#k-circle"/></svg>Geometry</div>
        <div class="slot"><svg class="sock"><use href="#k-ring"/></svg></div>
      </div>
    </article>
  </section>
</main>
</body>
</html>
```
FILE: styles.css
```css
* { box-sizing: border-box; }
body {
  margin: 0;
  background: #161616;
  color: #e0e0e0;
  font: 500 11px/14px Inter, "Liberation Sans", sans-serif;
  font-feature-settings: "cv08", "tnum";
}
button, input, select {
  font: inherit;
  font-feature-settings: inherit;
  color: inherit;
  margin: 0;
  padding: 0;
  border: 0;
  background: none;
  border-radius: 0;
  min-width: 0;
}
select { appearance: none; flex: 1; outline: 0; }
h2, h3, p { margin: 0; font: inherit; }
svg { display: block; flex: none; }
.defs { position: absolute; width: 0; height: 0; }

.app {
  height: 100vh;
  padding-top: 3px;
  display: grid;
  grid-template-columns: 901fr 677fr;
  grid-template-rows: 447fr 530fr;
  gap: 4px 2px;
}
.sheet, .view, .nodes {
  position: relative;
  min-width: 0;
  min-height: 0;
  overflow: hidden;
  border-radius: 5px;
  display: flex;
  flex-direction: column;
}
.nodes { grid-column: 1 / 3; background: #1d1d1d; box-shadow: inset 0 1px #303030; }
.sheet { background: #303030; box-shadow: inset 0 1px #4a4a4a, inset 0 -1px #454545; }
.view { background: #3d3d3d; }

/* shared controls */
.i12 { width: 12px; height: 12px; }
.i14 { width: 14px; height: 14px; }
.i16 { width: 16px; height: 16px; }
.chev { width: 8px; height: 8px; }
.open { width: 12px; height: 8px; }
.bar { display: flex; align-items: center; height: 25px; flex: none; padding: 0 2px 1px; }
.btn, .pick, .group { height: 20px; border-radius: 4px; background: #282828; border: 1px solid #3d3d3d; display: flex; align-items: center; }
.kind { width: 32px; justify-content: space-between; padding: 0 3px; flex: none; }
.pick { padding: 0 3px 0 7px; }
.pick select { height: 100%; }
.bare { display: flex; align-items: center; }
.crumb { display: flex; align-items: center; gap: 9px; }
.group { border: 0; gap: 1px; overflow: hidden; flex: none; }
.lined { box-shadow: 0 0 0 1px #3d3d3d; height: 18px; }
.tog { width: 18px; height: 18px; display: flex; align-items: center; justify-content: center; color: #e0e0e0; }
.wide { width: 31px; justify-content: space-between; padding: 0 3px; }
.on { background: #4772b3; }
.grey { background: #545454; }
.off { background: #444; color: #888; }
.end { margin-left: auto; }
.menus { display: flex; }
.menus button { padding: 0 7px; }
.scroll { position: absolute; width: 3px; border-radius: 2px; background: #414141; }
.flap { position: absolute; right: 0; width: 9px; height: 14px; background: #252525; border-radius: 5px 0 0 5px; display: flex; align-items: center; color: #bbb; }
.flap svg { transform: rotate(90deg); }

/* spreadsheet */
.eval { width: 102px; margin: 0 9px 0 5px; }
.sheet .bare { margin-left: 17px; }
.sheet .group { margin-right: 6px; height: 18px; }
.sheet-body { flex: 1; min-height: 0; display: flex; overflow: hidden; }
.side { position: relative; width: 153px; flex: none; background: #2b2b2b; overflow: hidden; }
.panel { height: 24px; display: flex; align-items: center; gap: 4px; padding-left: 7px; background: #303030; }
.panel:first-child { height: 31px; padding-top: 3px; }
.row { position: relative; display: flex; align-items: center; gap: 9px; width: 141px; height: 22px; margin-left: 3px; padding: 0 4px 0 21px; white-space: nowrap; text-align: left; }
.geo { height: 17px; margin: 7px 0 6px 3px; }
.pill { background: linear-gradient(#4772b3, #4772b3) center / 100% 17px no-repeat; }
.geo.pill { border-radius: 3px; }
.tree { padding-top: 7px; }
.tree .open { position: absolute; left: 6px; }
.kids { position: relative; }
.kids::before { content: ""; position: absolute; z-index: 1; left: 15px; top: 0; bottom: 0; width: 1px; background: #555; }
.kids .row { padding-left: 35px; }
.row b { position: absolute; right: 4px; font-weight: 400; color: #777; }
.pill b { color: #c3d0e6; }
.side .scroll { left: 147px; top: 9px; bottom: 20px; }
.grid { position: relative; flex: 1; min-width: 0; overflow: hidden; background: #292929; }
table { width: 100%; border-collapse: collapse; table-layout: fixed; }
th, td { height: 20px; padding: 0 4px 0 0; text-align: right; font-weight: 500; color: #ccc; }
thead th { height: 21px; text-align: center; background: #303030; border-bottom: 1px solid #1f1f1f; }
th:first-child { width: 29px; background: #333; border-right: 1px solid #1f1f1f; padding-right: 2px; }
thead th:first-child { background: #303030; }
thead th:nth-child(2) { width: 181px; padding-right: 5px; }
th:nth-child(2), td:nth-child(4) { border-right: 1px solid #1f1f1f; }
tbody tr:nth-child(even) td { background: #2c2c2c; }
.grid .scroll { right: 2px; top: 31px; height: 76px; }
.grid .flap { top: 13px; }
.status { display: flex; align-items: center; justify-content: flex-end; gap: 11px; height: 24px; padding: 2px 8px 0 0; flex: none; }
.status i { width: 1px; height: 13px; background: #aaa; }

/* viewport */
.scene { position: absolute; inset: 0; width: 100%; height: 100%; }
.view .bar, .settings, .stage { position: relative; }
.glass { background: rgba(46, 46, 46, .85); }
.view .bar { padding: 0 2px 1px 5px; }
.view .btn, .view .pick { border-color: #222; height: 19px; }
.view .kind { width: 30px; padding: 0 2px; }
.view .group { height: 19px; margin-left: 7px; }
.mode { width: 110px; gap: 7px; padding: 0 2px 0 3px; }
.view .menus { margin: 0 20px 0 5px; }
.orient { width: 76px; gap: 6px; padding: 0 2px 0 3px; margin-right: 7px; }
.faint { opacity: .7; }
.settings { display: flex; justify-content: space-between; height: 24px; flex: none; }
.modes { display: flex; align-items: center; gap: 1px; padding: 0 8px; }
.opts { display: flex; align-items: center; padding: 0 7px 0 9px; }
.opts .btn { width: 66px; justify-content: space-between; padding: 0 3px 0 6px; }
.stage { flex: 1; min-height: 0; display: flex; padding: 9px 8px; }
.tools { display: flex; flex-direction: column; gap: 6px; width: 40px; flex: none; }
.tset { display: flex; flex-direction: column; gap: 1px; border-radius: 4px; overflow: hidden; background: #3d3d3d; }
.tool { position: relative; height: 34px; background: #282828; display: flex; align-items: center; justify-content: center; }
.tool svg { width: 24px; height: 24px; }
.tool i { position: absolute; right: 2px; bottom: 2px; border: 2px solid; border-color: transparent #aaa #aaa transparent; }
.tool.on { background: #4772b3; }
.info { margin: -1px 0 0 18px; font-weight: 600; line-height: 18px; color: #fff; text-shadow: 0 0 2px #000, 0 1px 2px #000; }
.nav { margin: 0 2px 0 auto; padding-top: 10px; width: 79px; display: flex; flex-direction: column; align-items: flex-end; gap: 3px; }
.axes { width: 76px; height: 60px; margin: 0 3px 10px 0; }
.axes text { font-size: 11px; font-weight: 700; text-anchor: middle; fill: #16202c; }
.round { width: 27px; height: 27px; border-radius: 50%; background: #2a2a2a; display: flex; align-items: center; justify-content: center; }
.round svg { width: 18px; height: 18px; }
.stage .flap { top: 15px; }

/* node editor */
.wires { position: absolute; inset: 0; width: 100%; height: 100%; }
.nodes .bar { position: relative; height: 26px; padding-bottom: 0; }
.modif { width: 80px; margin: 0 5px; }
.ident { position: absolute; left: 42%; padding-left: 3px; display: flex; align-items: center; gap: 9px; }
.ident input { width: 103px; padding: 0 7px; background: #1d1d1d; height: 18px; }
.right { margin-left: auto; display: flex; gap: 7px; padding-right: 7px; }
.path { position: relative; display: flex; align-items: center; height: 42px; padding-left: 13px; }
.sep { width: 8px; height: 12px; margin: 0 7px 0 16px; }
.nodes > .scroll { right: 3px; top: 35px; bottom: 4px; background: #303030; }
.nodes > .flap { top: 40px; }
.node { position: absolute; width: 161px; border-radius: 5px; background: #303030; box-shadow: 0 0 0 1px #151515, 0 2px 8px rgba(0, 0, 0, .6); font-size: 13px; font-weight: 400; line-height: 16px; }
.node h3 { height: 24px; display: flex; align-items: center; gap: 5px; padding: 0 0 2px 12px; border-radius: 5px 5px 0 0; background: #1d1d1d; white-space: nowrap; }
.nbody { padding: 3px 0 6px; text-shadow: 0 1px 2px rgba(0, 0, 0, .5); }
.slot { position: relative; height: 25px; display: flex; align-items: center; padding: 0 12px; }
.out { justify-content: flex-end; }
.sock { position: absolute; left: -8px; width: 16px; height: 16px; }
.out .sock { left: auto; right: -8px; }
.picks { display: flex; flex-direction: column; gap: 5px; padding: 8px 12px 1px; }
.loose { padding-top: 10px; }
.node .pick { height: 23px; }
.text { flex: 1; height: 23px; border-radius: 4px; border: 1px solid #3d3d3d; background: #1d1d1d; padding: 0 8px; }
.num { flex: 1; display: flex; justify-content: space-between; align-items: center; height: 22px; border-radius: 4px; background: #545454; padding: 0 16px 0 17px; }
.num input { width: 60px; text-align: right; }
.check { position: relative; display: flex; align-items: center; gap: 4px; color: #fff; }
.check input { appearance: none; width: 15px; height: 15px; border-radius: 2px; background: #4772b3; }
.check svg { position: absolute; left: 0; width: 15px; height: 15px; pointer-events: none; }
.c-geo { color: #00d6a3; }
.c-bool { color: #cca6d6; }
.c-str { color: #70b2ff; }
.c-val { color: #a1a1a1; }
.c-int { color: #598c5c; }
.c-vec { color: #6363c7; }
.n-in { left: 118px; top: 154px; }
.n-store { left: 441px; top: 126px; }
.n-store h3 { background: #1d2547; }
.n-random { left: 107px; top: 296px; }
.n-random h3 { background: #246283; }
.n-named { left: 527px; top: 369px; box-shadow: 0 0 0 1px #fff, 0 2px 8px rgba(0, 0, 0, .6); }
.n-named h3 { background: #83314a; }
.n-extrude { left: 776px; top: 117px; }
.n-extrude h3 { background: #1d725e; }
.n-out { left: 1043px; top: 115px; }
```
